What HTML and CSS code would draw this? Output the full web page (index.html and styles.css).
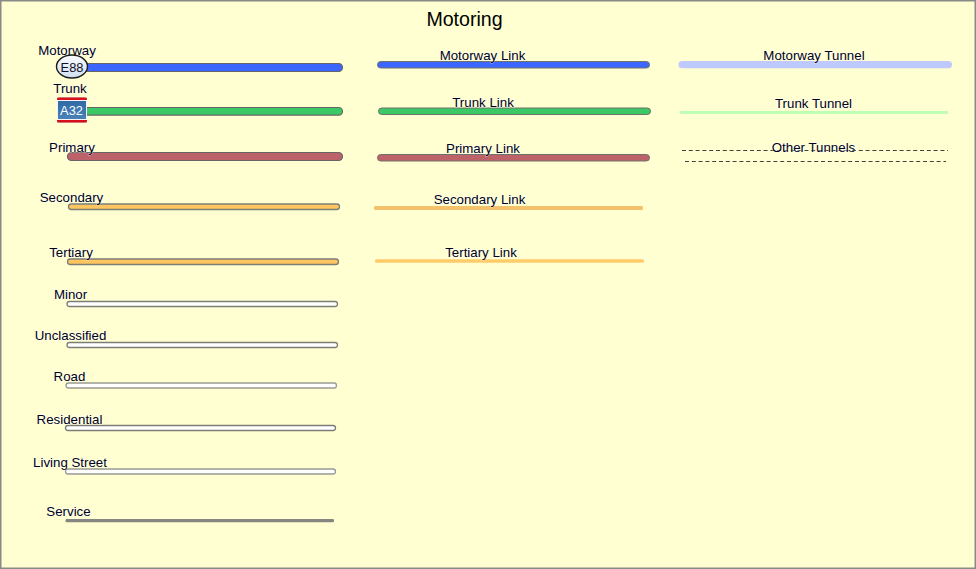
FILE: index.html
```html
<!DOCTYPE html>
<html lang="en">
<head>
<meta charset="utf-8">
<title>Motoring</title>
<link rel="stylesheet" href="styles.css">
</head>
<body>
<svg class="legend" viewBox="0 0 976 569" width="976" height="569" xmlns="http://www.w3.org/2000/svg">
  <defs>
    <linearGradient id="shield" x1="0" y1="0" x2="0" y2="1">
      <stop offset="0" stop-color="#fbfcfe"/>
      <stop offset="1" stop-color="#cfdff0"/>
    </linearGradient>
    <linearGradient id="plate" x1="0" y1="0" x2="0" y2="1">
      <stop offset="0" stop-color="#2f6aa6"/>
      <stop offset="1" stop-color="#4a82b8"/>
    </linearGradient>
  </defs>
  <rect class="frame" x="0.75" y="0.75" width="974.5" height="567.5"/>

  <rect class="road motorway" x="78" y="63.5" width="264.5" height="8" rx="4"/>
  <rect class="road trunk" x="80" y="107.5" width="262.5" height="7.6" rx="3.8"/>
  <rect class="road primary" x="67.5" y="152.5" width="275" height="8" rx="4"/>
  <rect class="road thin secondary" x="68.5" y="204" width="271" height="5.5" rx="2.75"/>
  <rect class="road thin tertiary" x="67.5" y="259" width="271" height="5.5" rx="2.75"/>
  <rect class="road thin minor" x="67" y="301.5" width="270.5" height="5" rx="2.5"/>
  <rect class="road thin minor" x="67" y="342.5" width="270.5" height="5" rx="2.5"/>
  <rect class="road thin minor pale" x="66" y="383" width="270.5" height="5" rx="2.5"/>
  <rect class="road thin minor" x="65.5" y="425.5" width="270" height="5" rx="2.5"/>
  <rect class="road thin minor pale" x="65.5" y="469" width="270" height="5" rx="2.5"/>
  <rect class="service" x="65.5" y="519" width="268.5" height="3.2" rx="1.2"/>

  <rect class="road link motorway" x="377.5" y="61.5" width="272" height="6.5" rx="3.25"/>
  <rect class="road link trunk" x="378.5" y="108" width="272" height="6.5" rx="3.25"/>
  <rect class="road link primary" x="377.5" y="154.5" width="272" height="6.5" rx="3.25"/>
  <rect class="secondary-link" x="374" y="206" width="269" height="4" rx="1.5"/>
  <rect class="tertiary-link" x="375" y="259.3" width="269" height="3.4" rx="1.5"/>

  <rect class="motorway-tunnel" x="678.5" y="61" width="273.5" height="7.3" rx="3.6"/>
  <rect class="trunk-tunnel" x="680" y="111" width="268" height="3"/>
  <line class="dash" x1="682" y1="150.5" x2="948" y2="150.5"/>
  <line class="dash" x1="685" y1="161.5" x2="946" y2="161.5"/>

  <text class="title" x="464.5" y="26">Motoring</text>

  <text class="label" x="67" y="55">Motorway</text>
  <text class="label" x="70" y="93">Trunk</text>
  <text class="label" x="72" y="152">Primary</text>
  <text class="label" x="71.5" y="202">Secondary</text>
  <text class="label" x="71" y="257">Tertiary</text>
  <text class="label" x="70.5" y="299">Minor</text>
  <text class="label" x="70.5" y="340">Unclassified</text>
  <text class="label" x="69.5" y="381">Road</text>
  <text class="label" x="69.5" y="424">Residential</text>
  <text class="label" x="70" y="467">Living Street</text>
  <text class="label" x="68.5" y="516">Service</text>

  <text class="label" x="482.5" y="60">Motorway Link</text>
  <text class="label" x="483" y="107">Trunk Link</text>
  <text class="label" x="483" y="153">Primary Link</text>
  <text class="label" x="479.5" y="204">Secondary Link</text>
  <text class="label" x="481" y="257">Tertiary Link</text>

  <text class="label" x="814" y="60">Motorway Tunnel</text>
  <text class="label" x="813.5" y="108">Trunk Tunnel</text>
  <text class="label" x="813.5" y="152">Other Tunnels</text>

  <ellipse class="badge" cx="72" cy="66.5" rx="15.5" ry="11.5"/>
  <text class="badge-text" x="72" y="72">E88</text>

  <rect class="plate-edge" x="57" y="97" width="30" height="26" rx="1.5"/>
  <rect class="plate-red" x="57" y="97.5" width="30" height="25" rx="1.5"/>
  <rect class="plate-blue" x="57.5" y="100.5" width="29" height="19"/>
  <text class="plate-text" x="71.5" y="115">A32</text>
</svg>
</body>
</html>
```
FILE: styles.css
```css
html, body {
  margin: 0;
  padding: 0;
  background: #ffffd2;
}

.legend {
  display: block;
}

.frame {
  fill: #ffffd2;
  stroke: #8a8a86;
  stroke-width: 1.5;
}

.road {
  stroke: #666;
  stroke-width: 1.2;
}

.road.thin {
  stroke: #7d7d78;
  stroke-width: 1.3;
}

.road.link {
  stroke: #70706c;
  stroke-width: 1;
}

.motorway { fill: #3b66ff; }
.trunk { fill: #3cc864; }
.primary { fill: #bc6268; }
.secondary { fill: #ffc660; }
.tertiary { fill: #ffc660; }
.minor { fill: #ffffff; }
.road.thin.pale { stroke: #9a9a94; }

.service { fill: #858581; }
.secondary-link { fill: #f3c26a; }
.tertiary-link { fill: #ffcb6b; }
.motorway-tunnel { fill: #bdc9ff; }
.trunk-tunnel { fill: #bfffb5; }

.dash {
  stroke: #44443f;
  stroke-width: 1.2;
  stroke-dasharray: 4 2.8;
}

.title,
.label,
.badge-text,
.plate-text {
  font-family: "Liberation Sans", Arial, sans-serif;
  text-anchor: middle;
}

.title {
  font-size: 19.6px;
  fill: #000;
}

.label {
  font-size: 13.3px;
  fill: #000020;
  paint-order: stroke;
  stroke: #ffffff;
  stroke-opacity: 0.55;
  stroke-width: 1.2px;
}

.badge {
  fill: url(#shield);
  stroke: #1c1c1c;
  stroke-width: 1.4;
}

.badge-text {
  font-size: 12.8px;
  fill: #10102a;
}

.plate-edge { fill: #cfd2d0; }
.plate-red { fill: #d8101c; }

.plate-blue {
  fill: url(#plate);
  stroke: #f4f4f4;
  stroke-width: 1;
}

.plate-text {
  font-size: 12.8px;
  fill: #ffffff;
}
```
